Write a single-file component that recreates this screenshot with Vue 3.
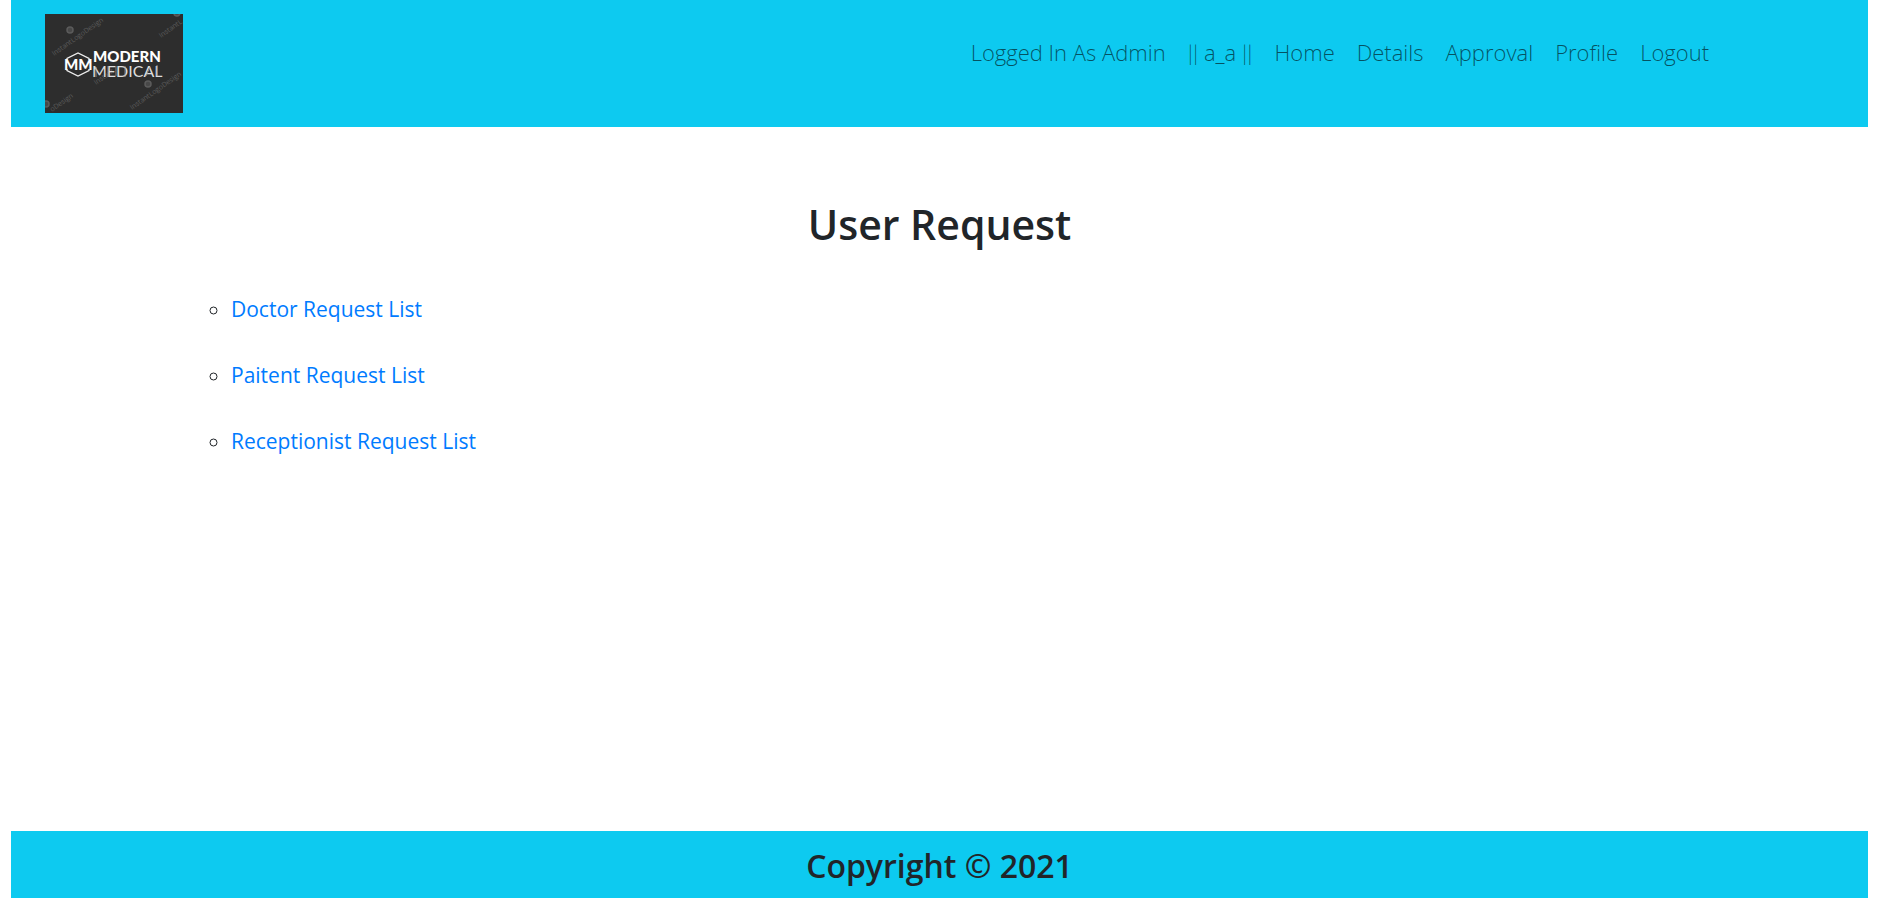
<script setup>
const pages = ['Home', 'Details', 'Approval', 'Profile', 'Logout']
const requests = ['Doctor Request List', 'Paitent Request List', 'Receptionist Request List']
</script>

<template>
  <div class="page">
    <header class="banner">
      <a class="brand" href="#" aria-label="Modern Medical">
        <svg class="logo" viewBox="0 0 138 99" aria-hidden="true">
          <rect width="138" height="99" fill="#2d2d2d" />
          <g class="mark">
            <text transform="translate(9 42) rotate(-35)">InstantLogoDesign</text>
            <text transform="translate(116 24) rotate(-35)">InstantL</text>
            <text transform="translate(51 71) rotate(-35)">Instant</text>
            <text transform="translate(87 96) rotate(-35)">InstantLogoDesign</text>
            <text transform="translate(7 98) rotate(-35)">oDesign</text>
          </g>
          <g fill="#484848" stroke="#5b5b5b" stroke-width="1.5">
            <circle cx="25" cy="16" r="3" />
            <circle cx="103" cy="70" r="3" />
            <circle cx="132" cy="-1" r="3" />
            <circle cx="1" cy="90" r="3" />
          </g>
          <path d="M22 46V44.500L33 39 44 44.500V46M22 55V56.500L33 62 44 56.500V55" fill="none" stroke="#eee" stroke-width="1.300" />
          <text class="initials" x="19" y="56">MM</text>
          <text class="modern" x="48" y="48">MODERN</text>
          <text class="medical" x="47" y="63">MEDICAL</text>
          <path d="M51 53V63M63 52V63M71 52V62M80 52V63M101 62 105 53M112 51V62" fill="none" stroke="#999" stroke-width="0.800" />
        </svg>
      </a>
      <nav class="nav">
        <a href="#">Logged In As Admin</a>
        <a href="#"><span class="bars">||</span> a_a <span class="bars">||</span></a>
        <a v-for="name in pages" :key="name" href="#">{{ name }}</a>
      </nav>
    </header>

    <main class="content">
      <h1>User Request</h1>
      <ul class="requests">
        <li v-for="request in requests" :key="request"><a href="#">{{ request }}</a></li>
      </ul>
    </main>

    <footer class="footer">
      <h2>Copyright © 2021</h2>
    </footer>
  </div>
</template>

<style>
body {
  background: #fff;
}
</style>

<style scoped>
.page {
  display: flex;
  flex-direction: column;
  min-height: 100vh;
  padding: 0 12px 0 11px;
  box-sizing: border-box;
  color: #212529;
  font-family: "Segoe UI", "Open Sans", "Noto Sans", sans-serif;
  font-size: 22px;
  line-height: 33px;
}
a {
  text-decoration: none;
}
.banner {
  display: flex;
  justify-content: space-between;
  padding: 14px 159px 14px 34px;
  background: #0dcaf0;
}
.brand {
  display: block;
  width: 138px;
}
.logo {
  display: block;
  width: 100%;
}
.mark {
  fill: #5b5b5b;
  font: 7px "Open Sans", sans-serif;
}
.initials {
  fill: #fff;
  font: 900 15px Lato, sans-serif;
}
.modern {
  fill: #fff;
  font: 900 15px Lato, sans-serif;
}
.medical {
  fill: #ddd;
  font: 400 16px Lato, sans-serif;
}
.nav {
  display: flex;
  gap: 22px;
  padding-top: 22px;
}
.nav a {
  color: rgba(0, 0, 0, 0.6);
  font-weight: 300;
  white-space: nowrap;
}
.bars {
  font-family: Lato, sans-serif;
}
.content {
  flex: 1;
}
h1,
h2 {
  margin: 0;
  text-align: center;
  font-weight: 600;
}
h1 {
  padding-top: 71px;
  font-size: 41px;
  line-height: 52px;
}
.requests {
  margin: 43px 0 0;
  padding-left: 220px;
  font-size: 21px;
  list-style: circle;
}
.requests li {
  margin-bottom: 33px;
}
.requests a {
  color: #007bff;
}
.footer {
  padding: 15px 0 12px;
  background: #0dcaf0;
}
h2 {
  font-size: 32px;
  line-height: 40px;
}
</style>
